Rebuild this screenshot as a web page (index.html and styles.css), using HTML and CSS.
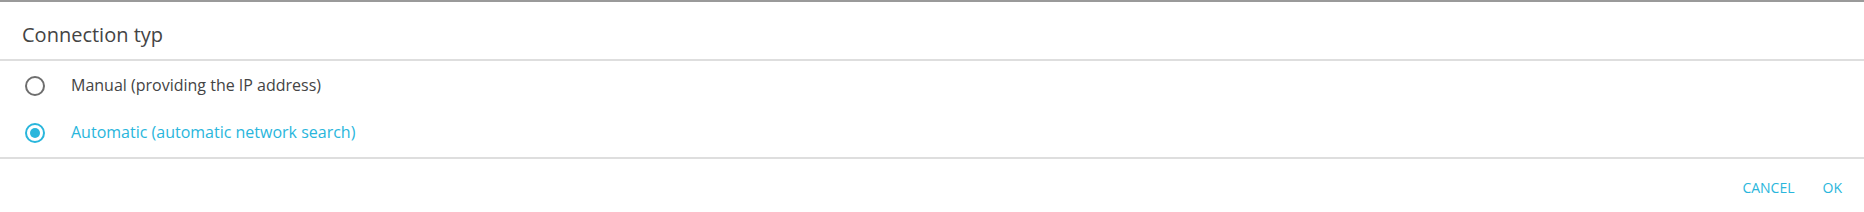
FILE: index.html
```html
<!DOCTYPE html>
<html lang="en">
<head>
<meta charset="UTF-8">
<title>Connection typ</title>
<link rel="stylesheet" href="styles.css">
</head>
<body>
<div class="dialog">
    <div class="dialog-title">Connection typ</div>
    <div class="dialog-body">
        <label class="option">
            <span class="radio"></span>
            <span class="option-text">Manual (providing the IP address)</span>
        </label>
        <label class="option checked">
            <span class="radio"></span>
            <span class="option-text">Automatic (automatic network search)</span>
        </label>
    </div>
    <div class="dialog-actions">
        <span class="action">CANCEL</span>
        <span class="action">OK</span>
    </div>
</div>
</body>
</html>
```

FILE: styles.css
```css
body {
    margin: 0;
    padding: 0;
    background-color: white;
    font-family: "Open Sans", Arial, sans-serif;
}

.dialog {
    border-top: 2px solid #9a9a9a;
    background-color: white;
}

.dialog-title {
    height: 59px;
    box-sizing: border-box;
    padding: 20px 0 0 22px;
    font-size: 20px;
    line-height: 26px;
    color: #444;
    border-bottom: 2px solid #dedede;
}

.dialog-body {
    padding: 1px 0 0 0;
    border-bottom: 2px solid #dedede;
    height: 98px;
    box-sizing: border-box;
}

.option {
    display: flex;
    align-items: center;
    height: 47px;
    padding-left: 25px;
    font-size: 16px;
    line-height: 20px;
    color: #444;
}

.option-text {
    padding-bottom: 2px;
}

.radio {
    width: 16px;
    height: 16px;
    border: 2px solid #6e6e6e;
    border-radius: 50%;
    position: relative;
    margin-right: 26px;
}

.option.checked {
    color: #29b6dc;
}

.option.checked .radio {
    border-color: #29b6dc;
}

.option.checked .radio::after {
    content: "";
    position: absolute;
    top: 3px;
    left: 3px;
    width: 10px;
    height: 10px;
    border-radius: 50%;
    background-color: #29b6dc;
}

.dialog-actions {
    display: flex;
    justify-content: flex-end;
    gap: 28px;
    padding: 19px 22px 0 0;
}

.action {
    font-size: 14px;
    color: #29b6dc;
    line-height: 20px;
}
```
